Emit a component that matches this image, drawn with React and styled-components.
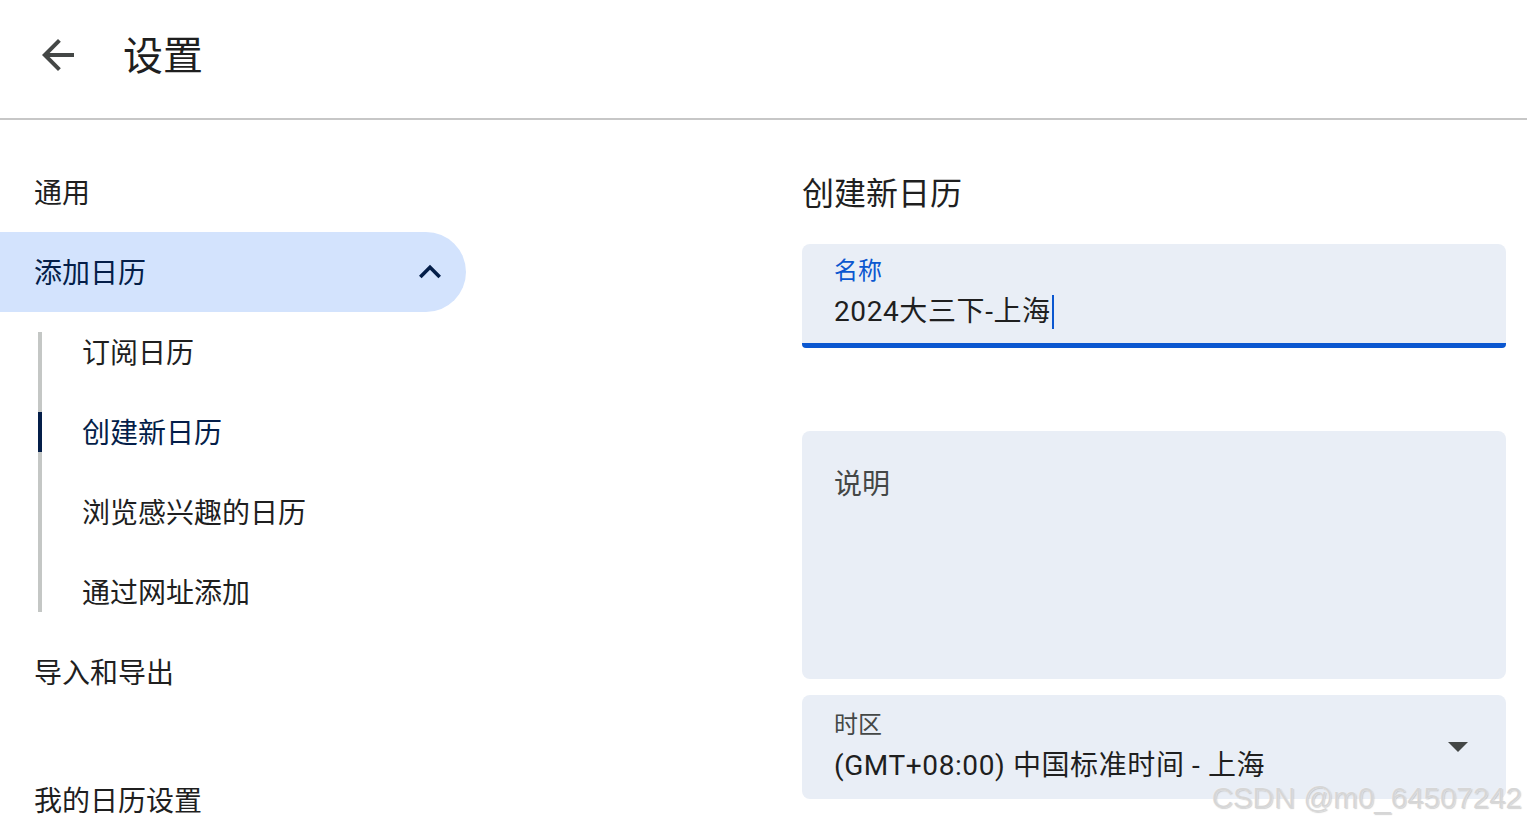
import React from "react";
import styled, { createGlobalStyle } from "styled-components";

const Global = createGlobalStyle`
  html, body { margin: 0; padding: 0; background: #fff; overflow: hidden; }
  body { font-family: Roboto, "Noto Sans CJK SC", "Noto Sans", sans-serif; color: #1f1f1f; }
  * { box-sizing: border-box; }
`;

const Page = styled.div`
  position: relative;
  width: 1527px;
  height: 824px;
  overflow: hidden;
`;

const Header = styled.header`
  height: 120px;
  border-bottom: 2px solid #c7c7c7;
  display: flex;
  align-items: center;
  padding-left: 34px;
  padding-bottom: 4px;
`;

const BackButton = styled.button`
  width: 48px;
  height: 48px;
  border: none;
  background: transparent;
  padding: 0;
  margin-top: -4px;
  display: flex;
  align-items: center;
  justify-content: center;
  color: #444746;
  cursor: pointer;
`;

const HeaderTitle = styled.h1`
  margin: 0 0 0 41px;
  font-size: 40px;
  font-weight: 400;
  line-height: 48px;
  color: #1f1f1f;
`;

const Body = styled.div`
  display: grid;
  grid-template-columns: 466px 704px;
  column-gap: 336px;
  padding-top: 32px;
`;

const Sidebar = styled.nav`
  display: flex;
  flex-direction: column;
`;

const NavItem = styled.div`
  height: 80px;
  display: flex;
  align-items: center;
  justify-content: space-between;
  padding-left: 34px;
  padding-right: 14px;
  padding-bottom: 3px;
  font-size: 28px;
  color: ${(p) => (p.$active ? "#041e49" : "#1f1f1f")};
  background: ${(p) => (p.$active ? "#d3e3fd" : "transparent")};
  border-radius: 0 40px 40px 0;
  margin-top: ${(p) => p.$gap || 0}px;

  svg { margin-top: 3px; }
`;

const SubList = styled.div`
  display: flex;
  flex-direction: column;
`;

const SubItem = styled.div`
  position: relative;
  height: 80px;
  display: flex;
  align-items: center;
  padding-left: 82px;
  padding-bottom: 3px;
  font-size: 28px;
  color: ${(p) => (p.$active ? "#041e49" : "#1f1f1f")};

  &::before {
    content: "";
    position: absolute;
    left: 38px;
    width: 4px;
    top: 0;
    bottom: 0;
    background: #c4c7c5;
  }
  &:first-child::before { top: 20px; }
  &:last-child::before { bottom: 20px; }

  &::after {
    content: "";
    position: absolute;
    left: 38px;
    width: 4px;
    top: 20px;
    bottom: 20px;
    background: #041e49;
    display: ${(p) => (p.$active ? "block" : "none")};
  }
`;

const Main = styled.main`
  display: flex;
  flex-direction: column;
`;

const SectionTitle = styled.h2`
  margin: 0;
  height: 80px;
  padding-bottom: 3px;
  display: flex;
  align-items: center;
  font-size: 32px;
  font-weight: 400;
  color: #1f1f1f;
`;

const Field = styled.div`
  position: relative;
  background: #e9eef6;
  border-radius: ${(p) => (p.$focused ? "8px 8px 4px 4px" : "8px")};
  border-bottom: ${(p) => (p.$focused ? "5px solid #0b57d0" : "none")};
  padding: ${(p) => p.$pad};
  margin-top: ${(p) => p.$mt}px;
  height: ${(p) => p.$h}px;
  display: flex;
  flex-direction: column;
`;

const Label = styled.div`
  font-size: ${(p) => p.$size || 24}px;
  line-height: ${(p) => p.$lh || 32}px;
  color: ${(p) => (p.$focused ? "#0b57d0" : "#444746")};
`;

const Value = styled.div`
  margin-top: 5px;
  font-size: 28px;
  line-height: 40px;
  letter-spacing: 0.6px;
  color: #1f1f1f;
  display: flex;
  align-items: center;
`;

const Caret = styled.span`
  display: inline-block;
  width: 2px;
  height: 34px;
  background: #0b57d0;
  margin-left: 1px;
`;

const DropArrow = styled.span`
  position: absolute;
  right: 38px;
  top: 47px;
  width: 0;
  height: 0;
  border-left: 10px solid transparent;
  border-right: 10px solid transparent;
  border-top: 10px solid #444746;
`;

const Watermark = styled.div`
  position: absolute;
  right: 5px;
  bottom: 9px;
  font-family: "Liberation Sans", Arial, sans-serif;
  font-size: 29.5px;
  line-height: 34px;
  color: #d6d6d6;
  text-shadow: 0 0 1px #fff, 1px 1px 1px rgba(150, 150, 150, 0.45);
  pointer-events: none;
`;

const ArrowBack = () => (
  <svg width="48" height="48" viewBox="0 0 24 24" fill="currentColor">
    <path d="M20 11H7.83l5.59-5.59L12 4l-8 8 8 8 1.41-1.41L7.83 13H20v-2z" />
  </svg>
);

const ExpandLess = () => (
  <svg width="44" height="44" viewBox="0 0 24 24" fill="#041e49">
    <path d="M12 8l-6 6 1.41 1.41L12 10.83l4.59 4.58L18 14z" />
  </svg>
);

export default function App() {
  return (
    <Page>
      <Global />
      <Header>
        <BackButton aria-label="返回">
          <ArrowBack />
        </BackButton>
        <HeaderTitle>设置</HeaderTitle>
      </Header>
      <Body>
        <Sidebar>
          <NavItem>通用</NavItem>
          <NavItem $active>
            添加日历
            <ExpandLess />
          </NavItem>
          <SubList>
            <SubItem>订阅日历</SubItem>
            <SubItem $active>创建新日历</SubItem>
            <SubItem>浏览感兴趣的日历</SubItem>
            <SubItem>通过网址添加</SubItem>
          </SubList>
          <NavItem>导入和导出</NavItem>
          <NavItem $gap={48}>我的日历设置</NavItem>
        </Sidebar>
        <Main>
          <SectionTitle>创建新日历</SectionTitle>
          <Field $focused $mt={12} $h={104} $pad="11px 32px 0">
            <Label $focused>名称</Label>
            <Value>
              2024大三下-上海
              <Caret />
            </Value>
          </Field>
          <Field $mt={83} $h={248} $pad="34px 32px 0">
            <Label $size={28} $lh={40}>说明</Label>
          </Field>
          <Field $mt={16} $h={104} $pad="14px 32px 0">
            <Label>时区</Label>
            <Value>(GMT+08:00) 中国标准时间 - 上海</Value>
            <DropArrow />
          </Field>
        </Main>
      </Body>
      <Watermark>CSDN @m0_64507242</Watermark>
    </Page>
  );
}
